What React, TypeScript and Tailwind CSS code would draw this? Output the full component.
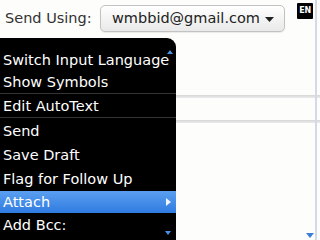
import React from 'react';

const font = { fontFamily: '"DejaVu Sans", "Liberation Sans", sans-serif' };

const Row: React.FC<{ label: string; h: string; active?: boolean; children?: React.ReactNode }> = ({
  label,
  h,
  active,
  children,
}) => (
  <div
    className={`${h} flex items-center justify-between pl-[3px] pr-[5px] text-[14.5px] text-white ${
      active ? 'bg-gradient-to-b from-[#5a9ff0] to-[#2f7be0]' : ''
    }`}
  >
    <span className="leading-[17px] whitespace-nowrap">{label}</span>
    {children}
  </div>
);

const Separator: React.FC = () => <div className="h-[2px] border-t border-[#343434]" />;

export default function App() {
  return (
    <div className="relative w-[320px] h-[240px] overflow-hidden bg-[#fdfdfb]" style={font}>
      {/* header */}
      <div className="h-[38px] flex items-center pb-[1px]">
        <span className="w-[100px] pl-[5px] text-[14.5px] leading-[17px] text-[#333] whitespace-nowrap">
          Send Using:
        </span>
        <div className="w-[185px] h-[27px] flex items-center pl-[11px] rounded-[5px] border border-[#c2c2c2] bg-gradient-to-b from-white to-[#e9e9e9] shadow-[0_1px_1px_rgba(0,0,0,0.08)]">
          <span className="text-[14.5px] leading-[17px] text-[#222] whitespace-nowrap">wmbbid@gmail.com</span>
          <svg width="9" height="5" viewBox="0 0 9 5" className="ml-[5px] mt-[1px]">
            <path d="M0 0 H9 L4.5 5 Z" fill="#222" />
          </svg>
        </div>
        <div className="self-start mt-[3px] ml-[12px] w-[16px] h-[16px] bg-black rounded-[1px] flex items-center justify-center">
          <span className="text-[8px] font-bold leading-none text-white tracking-[-0.4px]">EN</span>
        </div>
      </div>

      {/* fields */}
      <div className="h-[57px]" />
      <div className="h-[3px] bg-gradient-to-b from-[#d6d6d6] to-[#ececec]" />
      <div className="h-[22px]" />
      <div className="h-[3px] bg-gradient-to-b from-[#d6d6d6] to-[#ececec]" />

      {/* scroll indicator */}
      <div className="absolute right-[3px] top-0 w-[2px] h-[240px] bg-[#d3d9e6]" />
      <svg width="8" height="5" viewBox="0 0 8 5" className="absolute left-[306px] top-[233px]">
        <path d="M0 0 H8 L4 5 Z" fill="#3b7fd8" />
      </svg>

      {/* menu */}
      <div className="absolute left-0 top-[38px] w-[176px] h-[202px] bg-black rounded-tr-[9px] pt-[11px]">
        <svg width="6" height="4" viewBox="0 0 6 4" className="absolute left-[167px] top-[12px]">
          <path d="M0 4 H6 L3 0 Z" fill="#4a90e6" />
        </svg>
        <Row label="Switch Input Language" h="h-[22px]" />
        <Row label="Show Symbols" h="h-[22px]" />
        <Separator />
        <Row label="Edit AutoText" h="h-[22px]" />
        <Separator />
        <Row label="Send" h="h-[24px]" />
        <Row label="Save Draft" h="h-[24px]" />
        <Row label="Flag for Follow Up" h="h-[24px]" />
        <Row label="Attach" h="h-[22px]" active>
          <svg width="5" height="8" viewBox="0 0 5 8">
            <path d="M0 0 L5 4 L0 8 Z" fill="#f2f6ff" />
          </svg>
        </Row>
        <Row label="Add Bcc:" h="h-[24px]" />
        <svg width="6" height="4" viewBox="0 0 6 4" className="absolute left-[165px] top-[193px]">
          <path d="M0 0 H6 L3 4 Z" fill="#4a90e6" />
        </svg>
      </div>
    </div>
  );
}
